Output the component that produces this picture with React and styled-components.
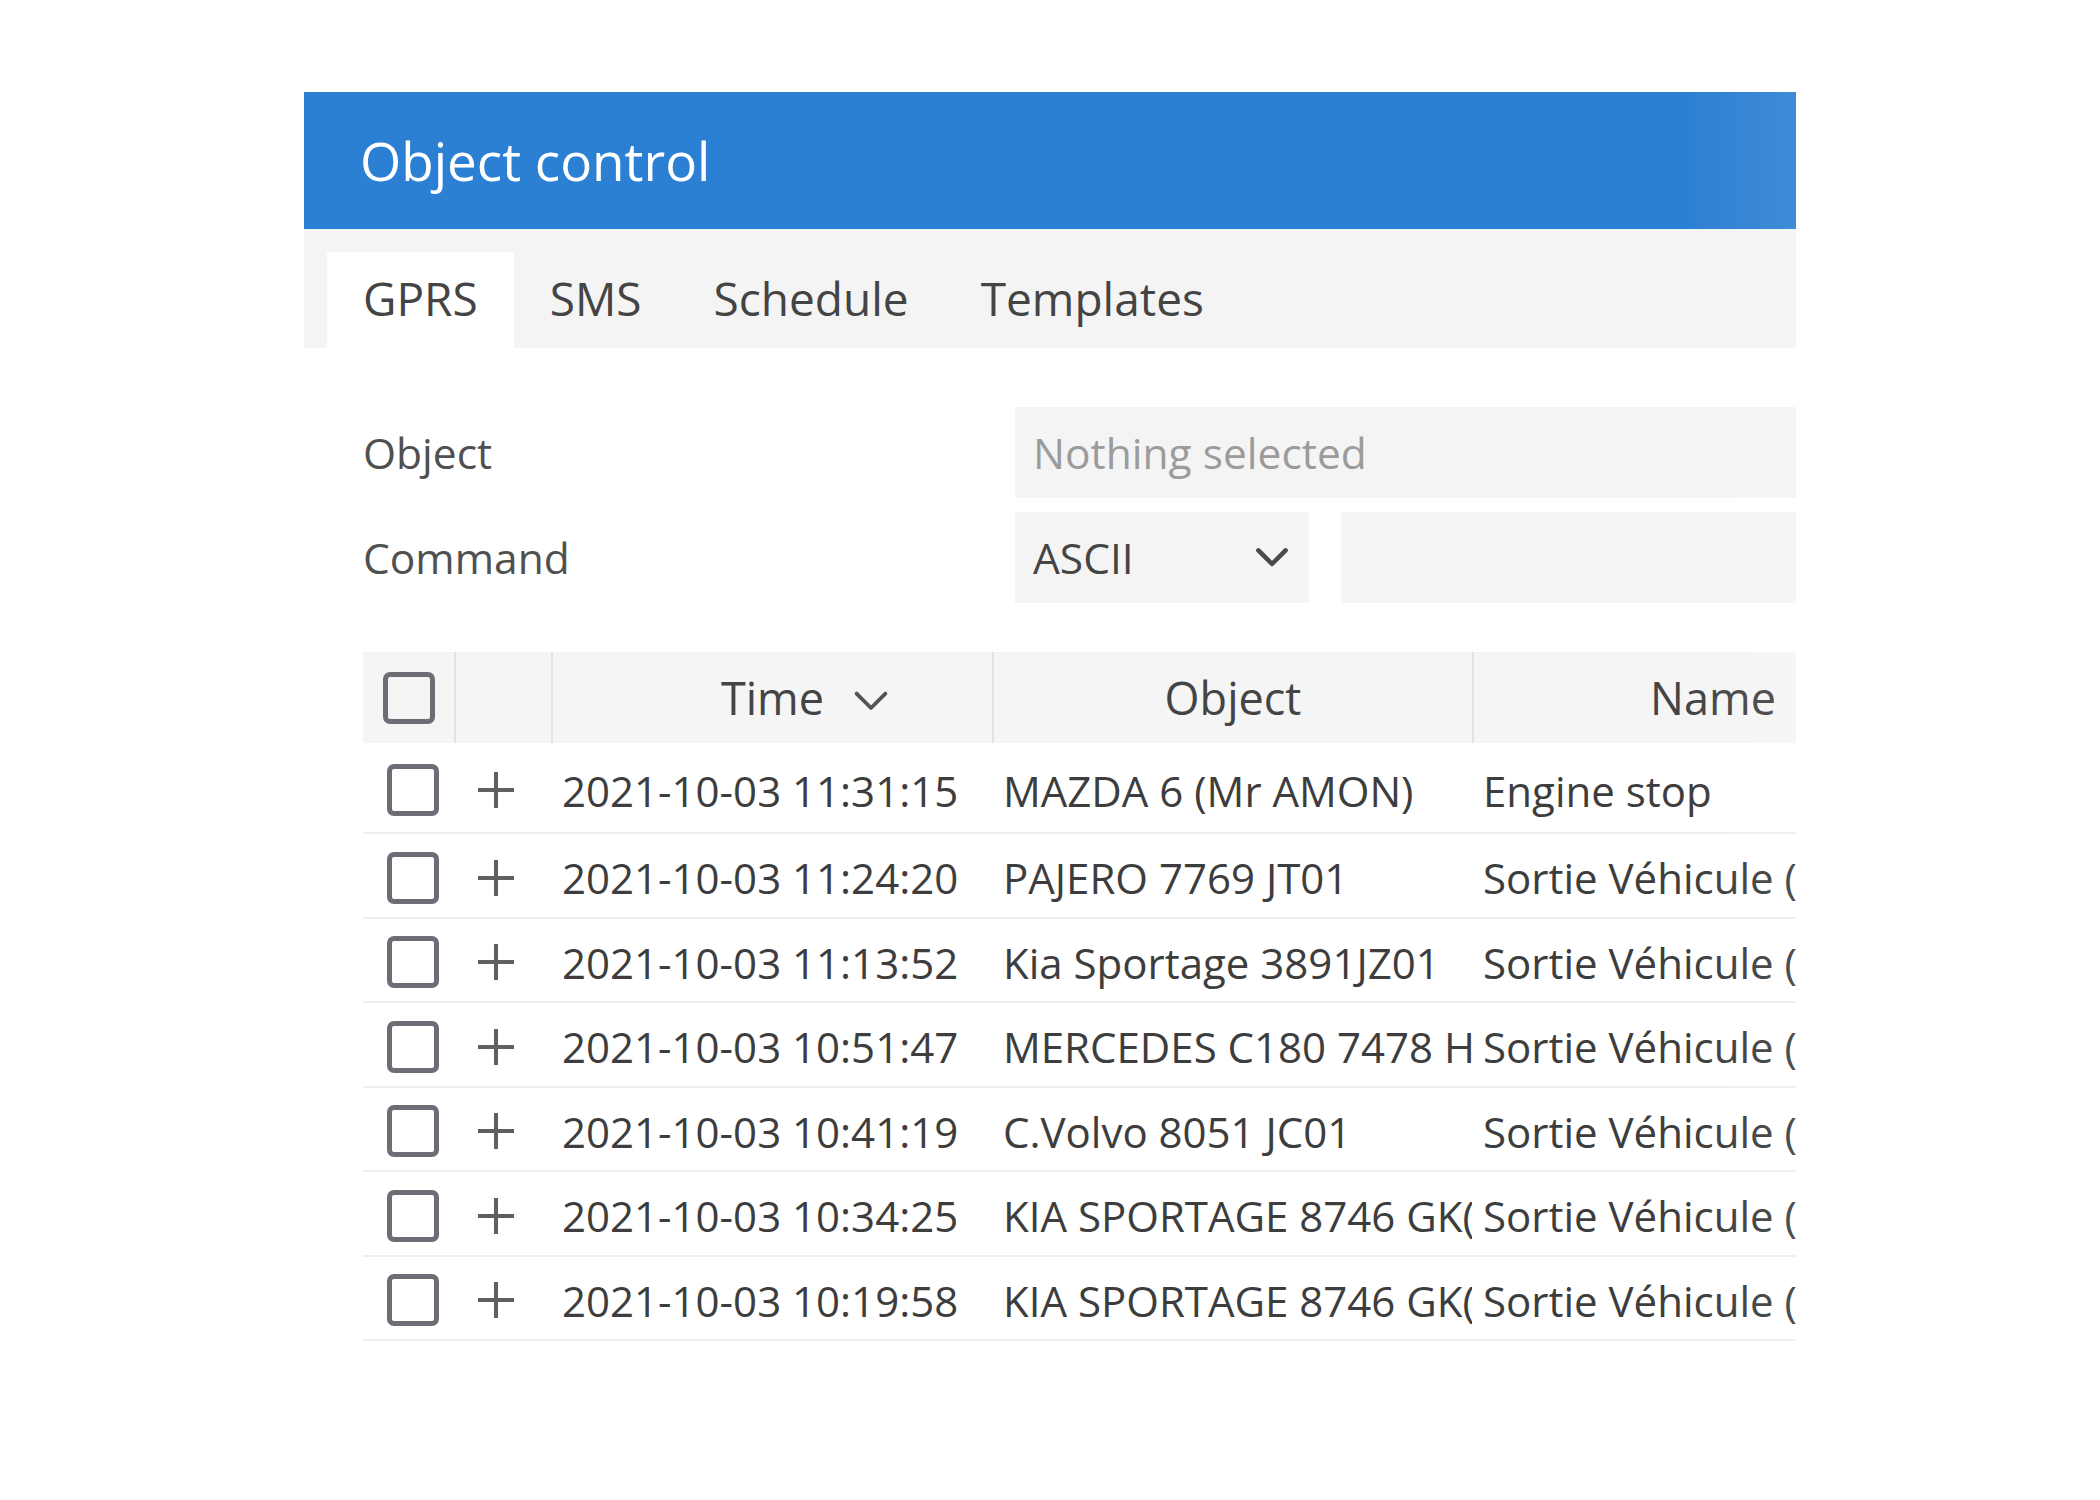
import React from 'react';
import styled, { createGlobalStyle } from 'styled-components';

const GlobalStyle = createGlobalStyle`
  body {
    margin: 0;
    background: #ffffff;
    font-family: "Open Sans", "Noto Sans", sans-serif;
  }
`;

const Page = styled.div`
  padding: 92px 0 0 304px;
`;

const Panel = styled.div`
  position: relative;
  width: 1492px;
  overflow: hidden;
  background: #fff;
  &::after {
    content: '';
    position: absolute;
    top: 0;
    right: 0;
    bottom: 0;
    width: 110px;
    background: linear-gradient(to right, rgba(255, 255, 255, 0), rgba(255, 255, 255, 0.09));
    pointer-events: none;
  }
`;

const Header = styled.div`
  height: 137px;
  background: #2c80d3;
  display: flex;
  align-items: center;
  padding-left: 56px;
  color: #fff;
  font-size: 53px;
`;

const TabBar = styled.div`
  display: flex;
  background: #f4f4f4;
  padding: 23px 0 0 23px;
`;

const Tab = styled.div`
  height: 96px;
  display: flex;
  align-items: center;
  padding: 0 36px 4px;
  box-sizing: border-box;
  font-size: 46px;
  color: #444;
  background: ${(p) => (p.$active ? '#ffffff' : 'transparent')};
`;

const Body = styled.div`
  padding: 59px 0 40px 59px;
`;

const FormRow = styled.div`
  display: grid;
  grid-template-columns: 652px 1fr;
  align-items: center;
  height: 91px;
  margin-bottom: 14px;
`;

const Label = styled.div`
  font-size: 42.5px;
  color: #505050;
`;

const Field = styled.div`
  height: 91px;
  background: #f4f4f4;
  display: flex;
  align-items: center;
  padding: 0 18px;
  font-size: 42.5px;
  color: ${(p) => (p.$placeholder ? '#9b9b9b' : '#444')};
  box-sizing: border-box;
`;

const CommandFields = styled.div`
  display: grid;
  grid-template-columns: 294px 1fr;
  gap: 32px;
`;

const Select = styled(Field)`
  justify-content: space-between;
  padding-right: 20px;
`;

const Table = styled.div`
  margin-top: 49px;
  width: 1700px;
`;

const columns = '91px 97px 441px 480px 480px';

const HeadRow = styled.div`
  display: grid;
  grid-template-columns: ${columns};
  height: 91px;
  background: #f5f5f5;
`;

const HeadCell = styled.div`
  display: flex;
  align-items: center;
  justify-content: center;
  font-size: 45px;
  color: #444;
  border-left: ${(p) => (p.$first ? 'none' : '2px solid #e2e2e2')};
`;

const SortLabel = styled.span`
  position: relative;
  & > svg {
    position: absolute;
    left: calc(100% + 29px);
    top: 50%;
    margin-top: -8px;
  }
`;

const Row = styled.div`
  display: grid;
  grid-template-columns: ${columns};
  height: ${(p) => (p.$first ? 91 : 84.5)}px;
  border-bottom: 2px solid #eeeeee;
  box-sizing: border-box;
`;

const Cell = styled.div`
  display: flex;
  align-items: center;
  padding-left: ${(p) => p.$pad || 0}px;
  padding-top: 5px;
  font-size: 42px;
  color: #3d3d3d;
  white-space: nowrap;
  overflow: hidden;
`;

const Box = styled.span`
  width: 52px;
  height: 52px;
  box-sizing: border-box;
  border: 5px solid #6d6d76;
  border-radius: 7px;
  display: inline-block;
`;

const Chevron = ({ size = 30, stroke = 3, color = '#555' }) => (
  <svg width={size} height={size * 0.6} viewBox="0 0 30 18" fill="none">
    <polyline
      points="3,3 15,15 27,3"
      stroke={color}
      strokeWidth={stroke}
      strokeLinecap="round"
      strokeLinejoin="round"
    />
  </svg>
);

const Plus = () => (
  <svg width="40" height="40" viewBox="0 0 40 40">
    <path d="M20 2 V38 M2 20 H38" stroke="#5f5f5f" strokeWidth="4" />
  </svg>
);

const rows = [
  ['2021-10-03 11:31:15', 'MAZDA 6 (Mr AMON)', 'Engine stop'],
  ['2021-10-03 11:24:20', 'PAJERO 7769 JT01', 'Sortie Véhicule (Parking)'],
  ['2021-10-03 11:13:52', 'Kia Sportage 3891JZ01', 'Sortie Véhicule (Parking)'],
  ['2021-10-03 10:51:47', 'MERCEDES C180 7478 HZ01', 'Sortie Véhicule (Parking)'],
  ['2021-10-03 10:41:19', 'C.Volvo 8051 JC01', 'Sortie Véhicule (Parking)'],
  ['2021-10-03 10:34:25', 'KIA SPORTAGE 8746 GK(01)', 'Sortie Véhicule (Parking)'],
  ['2021-10-03 10:19:58', 'KIA SPORTAGE 8746 GK(01)', 'Sortie Véhicule (Parking)'],
];

export default function App() {
  return (
    <>
      <GlobalStyle />
      <Page>
        <Panel>
          <Header>Object control</Header>
          <TabBar>
            <Tab $active>GPRS</Tab>
            <Tab>SMS</Tab>
            <Tab>Schedule</Tab>
            <Tab>Templates</Tab>
          </TabBar>
          <Body>
            <FormRow>
              <Label>Object</Label>
              <Field $placeholder>Nothing selected</Field>
            </FormRow>
            <FormRow>
              <Label>Command</Label>
              <CommandFields>
                <Select>
                  ASCII
                  <Chevron size={34} stroke={4} color="#4a4a4a" />
                </Select>
                <Field />
              </CommandFields>
            </FormRow>
            <Table>
              <HeadRow>
                <HeadCell $first>
                  <Box />
                </HeadCell>
                <HeadCell />
                <HeadCell>
                  <SortLabel>
                    Time
                    <Chevron size={36} stroke={3.2} color="#555" />
                  </SortLabel>
                </HeadCell>
                <HeadCell>Object</HeadCell>
                <HeadCell>Name</HeadCell>
              </HeadRow>
              {rows.map(([time, object, name], i) => (
                <Row key={time} $first={i === 0}>
                  <Cell $pad={24}>
                    <Box />
                  </Cell>
                  <Cell $pad={22}>
                    <Plus />
                  </Cell>
                  <Cell $pad={11}>{time}</Cell>
                  <Cell $pad={11}>{object}</Cell>
                  <Cell $pad={11}>{name}</Cell>
                </Row>
              ))}
            </Table>
          </Body>
        </Panel>
      </Page>
    </>
  );
}
